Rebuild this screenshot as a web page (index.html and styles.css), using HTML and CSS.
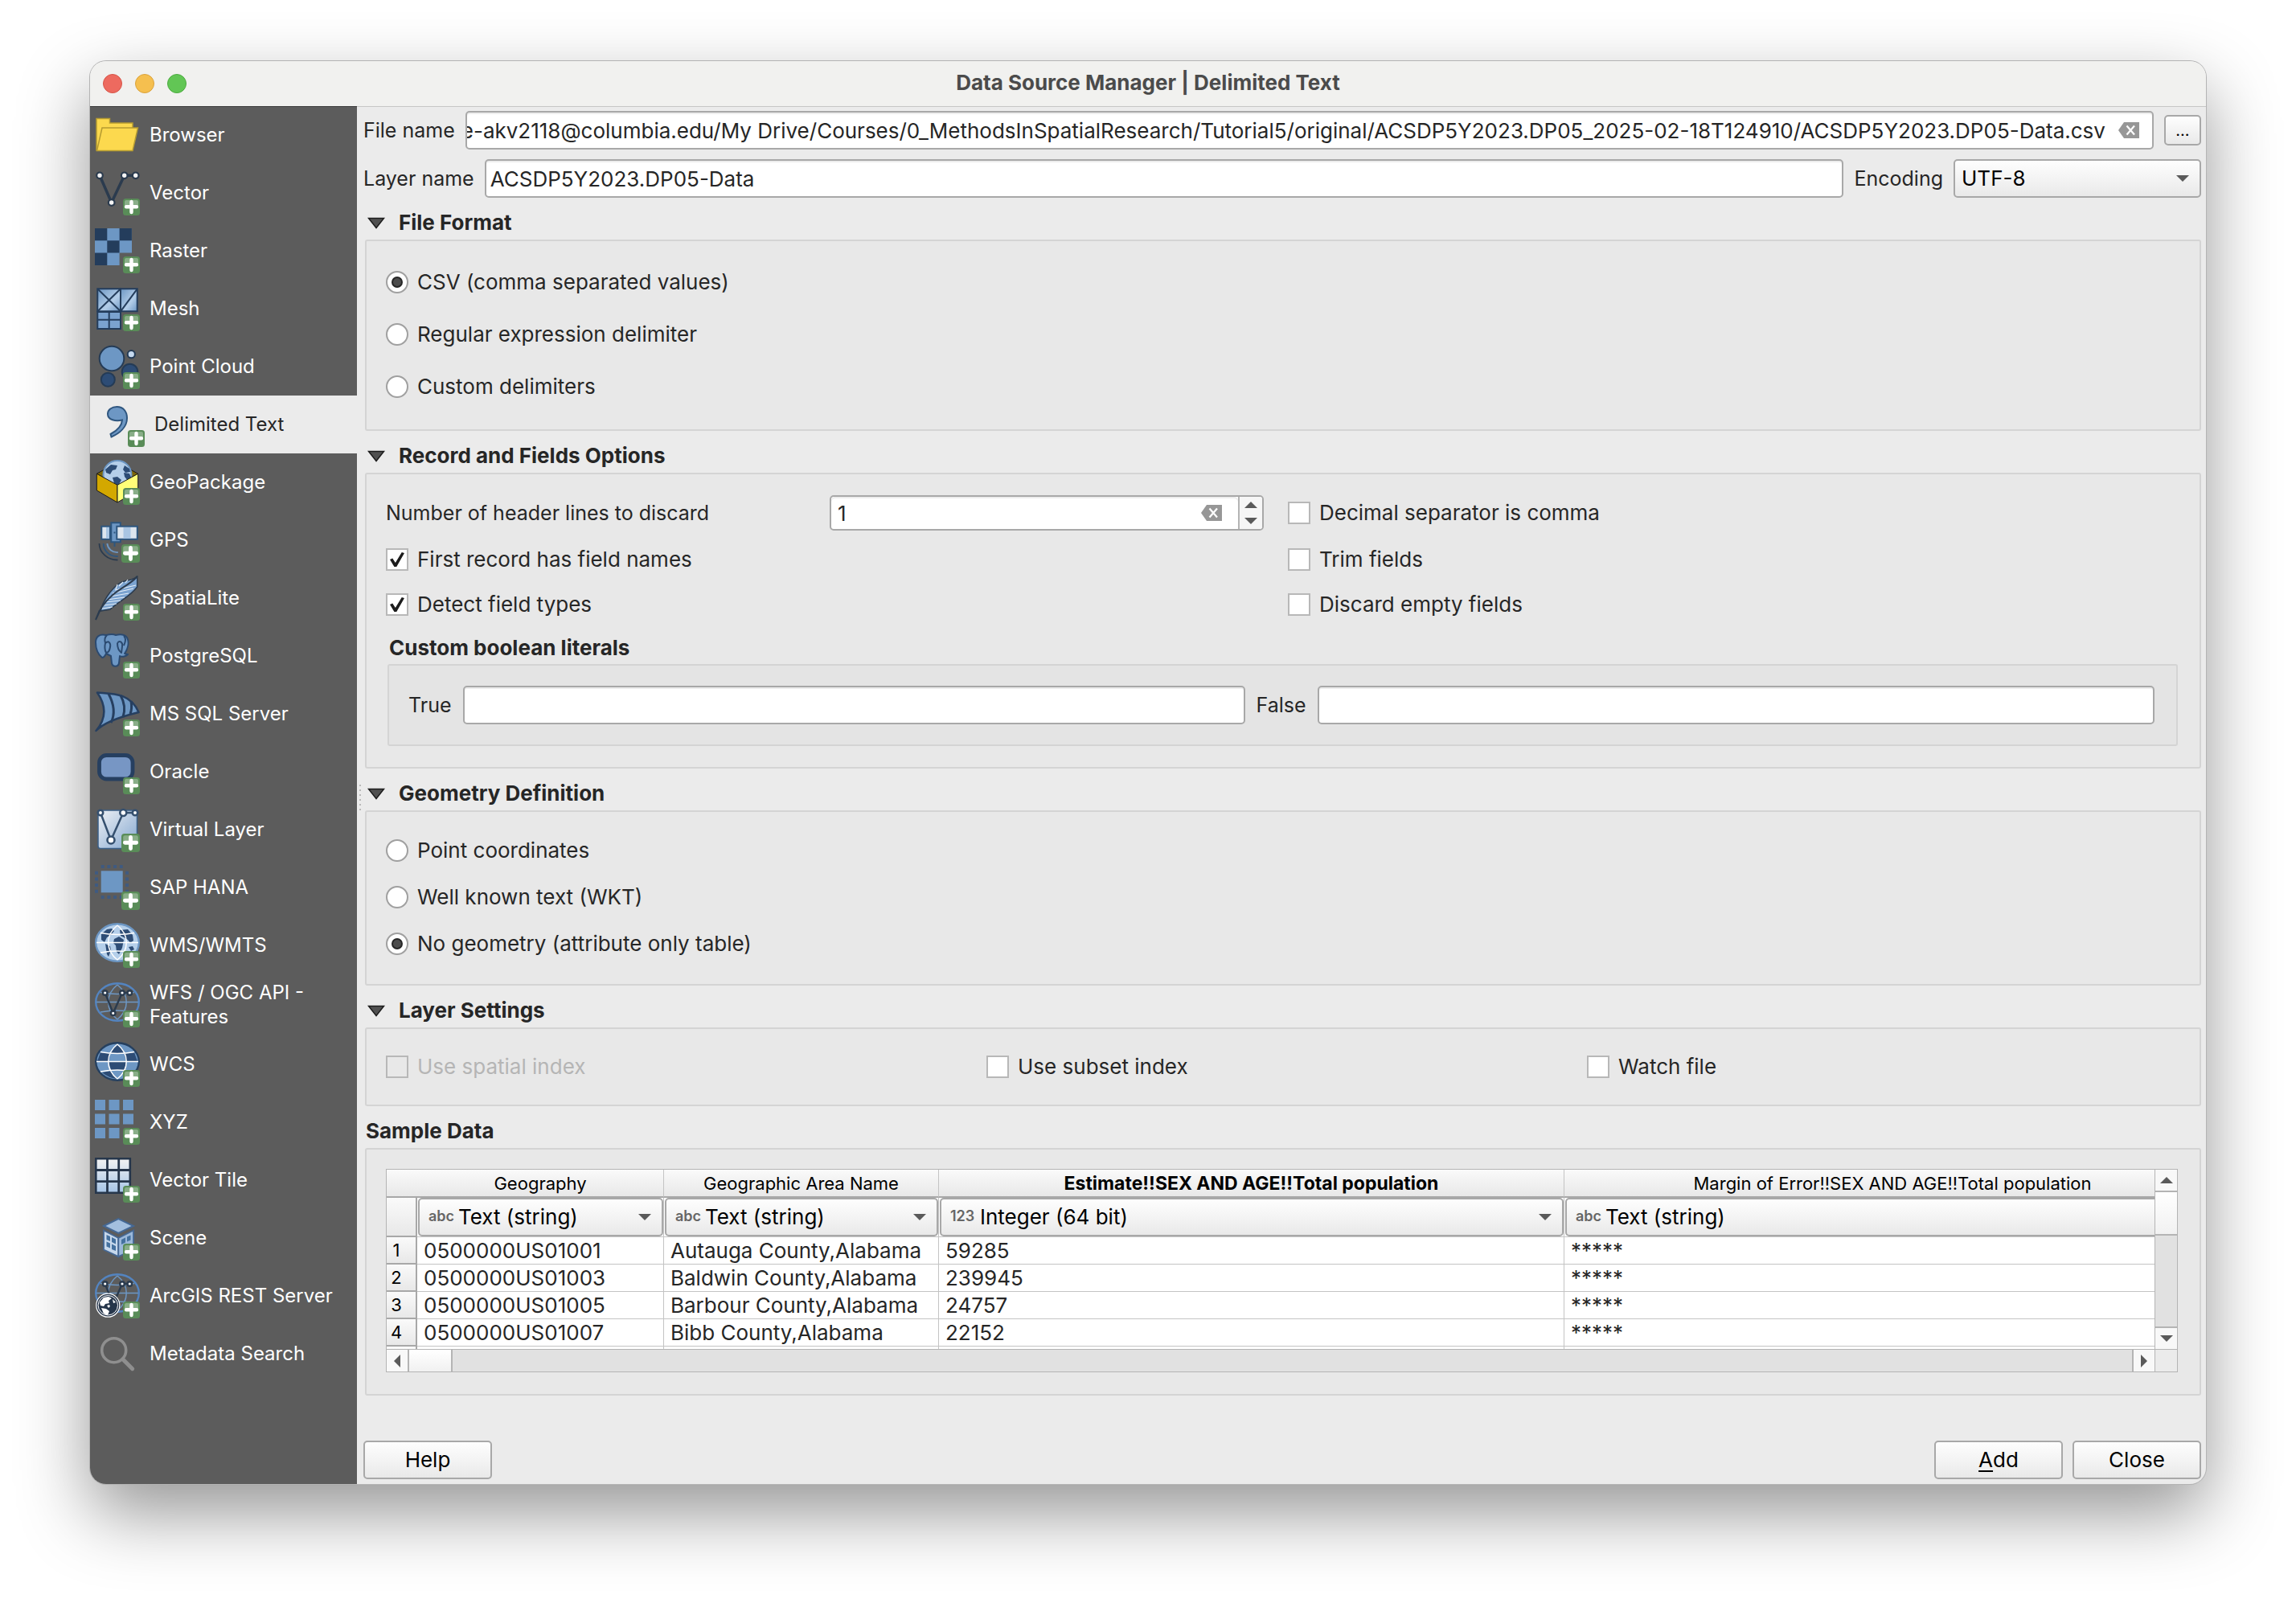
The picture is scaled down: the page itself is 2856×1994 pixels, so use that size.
FILE: index.html
```html
<!DOCTYPE html>
<html lang="en">
<head>
    <meta charset="utf-8">
    <title>Data Source Manager | Delimited Text</title>
    <link rel="stylesheet" href="styles.css">
</head>
<body>
    <!-- shared icon parts -->
    <svg class="defs" width="0" height="0" aria-hidden="true">
        <defs>
            <linearGradient id="sky" x1="0" y1="0" x2="1" y2="1">
                <stop offset="0" stop-color="#6d97c4"/>
                <stop offset=".6" stop-color="#b3cde8"/>
                <stop offset="1" stop-color="#6d97c4"/>
            </linearGradient>
            <linearGradient id="pale" x1="0" y1="0" x2="1" y2="1">
                <stop offset="0" stop-color="#eef1f5"/>
                <stop offset="1" stop-color="#84a7d0"/>
            </linearGradient>
            <linearGradient id="fade" x1="0" y1="0" x2="0" y2="1">
                <stop offset="0" stop-color="#f2f2f2"/>
                <stop offset="1" stop-color="#a5c4e6"/>
            </linearGradient>
        </defs>
        <symbol id="plus" viewBox="0 0 21 21">
            <rect width="21" height="21" rx="3.5" fill="#598c58"/>
            <path d="M2 10V4a2 2 0 0 1 2-2h13a2 2 0 0 1 2 2v6z" fill="#89ae88"/>
            <path d="M10.5 4v13M4 10.3h13" stroke="#fff" stroke-width="4.4" stroke-linecap="round"/>
        </symbol>
        <symbol id="meridians" viewBox="0 0 56 56">
            <path d="M28 3C13 15 13 34 28 46M28 3C43 15 43 34 28 46M2 24.5H54M7 12.5q21 4 42 0M7 37q21-4 42 0" fill="none" stroke="currentColor" stroke-width="1.5"/>
        </symbol>
        <symbol id="nodes" viewBox="0 0 56 56">
            <path d="M12.7 13l10 25.3L34 13h9.3" fill="none" stroke="#2b3b4e" stroke-width="2.4"/>
            <g fill="#fff" stroke="#2b3b4e" stroke-width="2.4">
                <circle cx="12.7" cy="13" r="2.8"/><circle cx="34" cy="13" r="2.8"/><circle cx="43.3" cy="13" r="2.8"/><circle cx="22.7" cy="38.3" r="2.8"/>
            </g>
        </symbol>
        <symbol id="clear" viewBox="0 0 26 20">
            <path d="M7 0h19v20H7L0 10z" fill="#979797"/>
            <path d="M10.5 4.5l9.5 11M20 4.5l-9.5 11" stroke="#fff" stroke-width="2.2"/>
        </symbol>
        <symbol id="caret" viewBox="0 0 16 8">
            <path d="M0 0h16L8 8z" fill="#5a5a5a"/>
        </symbol>
        <symbol id="disclosure" viewBox="0 0 22 15">
            <path d="M1.5 1.5h19L11 13.5z" fill="#505050" stroke="#1c1c1c" stroke-width="1.5"/>
        </symbol>
    </svg>

    <div class="window">
        <header class="titlebar">
            <div class="lights">
                <button class="light red" type="button" aria-label="Close window"></button>
                <button class="light amber" type="button" aria-label="Minimise"></button>
                <button class="light green" type="button" aria-label="Zoom"></button>
            </div>
            <h1>Data Source Manager | Delimited Text</h1>
        </header>

        <div class="body">
            <nav class="sidebar">
                <a class="item" href="#">
                    <svg class="icon" viewBox="0 0 56 56">
                        <path d="M2 47.5V7.5h16.5V13H47v6" fill="#fcd94e" stroke="#b59b31" stroke-width="1.5"/>
                        <path d="M9 19h44.5L47 47.5H2.5z" fill="#fcd94e" stroke="#b59b31" stroke-width="1.5"/>
                    </svg>
                    <span>Browser</span>
                </a>
                <a class="item" href="#">
                    <svg class="icon" viewBox="0 0 56 56">
                        <path d="M6 6.3L20.7 40l16-33.7h14" fill="none" stroke="#2b3b4e" stroke-width="3.5"/>
                        <g fill="#f4f4f4" stroke="#2b3b4e" stroke-width="2.2">
                            <circle cx="6" cy="6.3" r="3.8"/><circle cx="36.7" cy="6.3" r="3.8"/><circle cx="50.7" cy="6.3" r="3.8"/><circle cx="20.7" cy="40" r="3.8"/>
                        </g>
                        <use href="#plus" x="35" y="35" width="21" height="21"/>
                    </svg>
                    <span>Vector</span>
                </a>
                <a class="item" href="#">
                    <svg class="icon" viewBox="0 0 56 56">
                        <path d="M0 0h46v30.6H30.6V46H0z" fill="#6d97c4"/>
                        <path d="M0 0h15.3v15.3H0zM30.6 0h15.3v15.3H30.6zM15.3 15.3h15.3v15.3H15.3zM0 30.6h15.3V46H0z" fill="#243d5c"/>
                        <use href="#plus" x="35" y="35" width="21" height="21"/>
                    </svg>
                    <span>Raster</span>
                </a>
                <a class="item" href="#">
                    <svg class="icon" viewBox="0 0 56 56">
                        <g stroke="#243d5c" stroke-width="2">
                            <path d="M3.3 3.3H32v28H3.3z" fill="url(#sky)"/>
                            <path d="M32 3.3h20.7v28H32z" fill="url(#sky)"/>
                            <path d="M3.3 32H32v21H3.3z" fill="#7ba3d0"/>
                            <path d="M3.3 3.3l28.7 28M32 3.3l-28.7 28M52.7 3.3L32 31.3M17.7 32v21M3.3 41.7H32" fill="none"/>
                        </g>
                        <use href="#plus" x="35" y="35" width="21" height="21"/>
                    </svg>
                    <span>Mesh</span>
                </a>
                <a class="item" href="#">
                    <svg class="icon" viewBox="0 0 56 56">
                        <g stroke="#243b56" stroke-width="2">
                            <circle cx="21" cy="18" r="15.3" fill="#6d97c4"/>
                            <circle cx="45.3" cy="12.7" r="4.6" fill="#c5d9ef"/>
                            <circle cx="43.5" cy="34.5" r="9.8" fill="#2d4c75"/>
                            <circle cx="16.3" cy="44.3" r="8.5" fill="#2d4c75"/>
                        </g>
                        <use href="#plus" x="35" y="35" width="21" height="21"/>
                    </svg>
                    <span>Point Cloud</span>
                </a>
                <a class="item selected" href="#" aria-current="page">
                    <svg class="icon" viewBox="0 0 56 56">
                        <path d="M21.5 6C29 6 34 11.5 34 20c0 11-9 19-19.5 23.5L13.5 40C21 36 27.5 30.5 28 22.5c-8 2-18 0-18-7.5 0-5.5 5-9 11.5-9z" fill="#6d97c4" stroke="#2f567f" stroke-width="2"/>
                        <use href="#plus" x="35" y="35" width="21" height="21"/>
                    </svg>
                    <span>Delimited Text</span>
                </a>
                <a class="item" href="#">
                    <svg class="icon" viewBox="0 0 56 56">
                        <path d="M2.3 17.3L28 3l25.7 14.3L28 31.3z" fill="#7d6608" stroke="#1b1b1b"/>
                        <circle cx="28" cy="18.5" r="17.5" fill="#b5cfea" stroke="#6d97c4" stroke-width="2"/>
                        <path d="M13 12l7-6 8 1-2 5-4 1-3 5-5-2zM22 22l6-1 5 4-4 7-5-3zM37 7l6 4 1 4-6 1-3-4zM36 16l7 1 2 5-4 4-4-5z" fill="#2d4c75"/>
                        <path d="M2.3 17.3L28 31.3V53L2.3 38z" fill="#d3a800" stroke="#1b1b1b"/>
                        <path d="M53.7 17.3L28 31.3V53l25.7-15z" fill="#ffff78" stroke="#1b1b1b"/>
                        <use href="#plus" x="35" y="35" width="21" height="21"/>
                    </svg>
                    <span>GeoPackage</span>
                </a>
                <a class="item" href="#">
                    <svg class="icon" viewBox="0 0 56 56">
                        <g stroke="#2d567f" stroke-width="2">
                            <path d="M8.3 10.8H19v16H8.3z" fill="#dde5ee"/>
                            <path d="M20.3 6.3h11.5v24H20.3z" fill="#6d97c4"/>
                            <path d="M27.3 10.8h25.5v16H27.3z" fill="#dde5ee"/>
                            <path d="M24.5 31v5M23.5 18.5h2" fill="none"/>
                        </g>
                        <path d="M14 12h4v14h-4zM35.5 12h9v14h-9z" fill="#a9c5e3"/>
                        <g fill="none" stroke-width="1.8">
                            <path d="M5.5 32c0 12 11 21 23 20.5" stroke="#2b3b4e"/>
                            <path d="M10.7 32c0 10 8 16.5 18 16" stroke="#2d567f"/>
                            <path d="M15.3 32c1 7 6 11.5 13.5 11" stroke="#6d97c4"/>
                        </g>
                        <use href="#plus" x="33" y="33" width="23" height="23"/>
                    </svg>
                    <span>GPS</span>
                </a>
                <a class="item" href="#">
                    <svg class="icon" viewBox="0 0 56 56">
                        <path d="M52.7 1v13C44 26 32 30 19 42L7 44C10 32 19 18 30 10c7-5 16-3 22.7-9z" fill="#7ba3d0" stroke="#2b3b4e" stroke-width="1.5"/>
                        <path d="M22 22l26-6M25 18l26-6M19 26l23-4M15 30l22-3M13 33l19-2M11 37l16-2M9 41l13-2M30 13l5-5M26 17l2-6M38 9l3-4" stroke="#e3edf7" stroke-width="1.2"/>
                        <path d="M52.7 1C42 14 22 18 8 40L1 55l5-12" fill="none" stroke="#2b3b4e" stroke-width="2"/>
                        <use href="#plus" x="35" y="35" width="21" height="21"/>
                    </svg>
                    <span>SpatiaLite</span>
                </a>
                <a class="item" href="#">
                    <svg class="icon" viewBox="0 0 56 56">
                        <g fill="#6d97c4" stroke="#2b4a70" stroke-width="2" stroke-linejoin="round">
                            <path d="M14 2C6 0 1 4 1 11c0 8 3 15 8 19 3 0 4-3 5-5l6 3 1 9c1 5 8 5 9 0l1-9c3 2 8 0 10-2l-4-1c4-6 6-14 3-20-4-5-10-4-14-3-4-2-8-1-12 0z"/>
                            <path d="M15 2c-3 3-3 7-2 10 4-4 7 0 6 5-1 6-3 7-5 7-2-4-2-8-1-12M28 12c3-4 7-1 6 4l-1 8c-4-3-5-7-5-12M36 3c3 3 2 8 0 12" fill="none"/>
                        </g>
                        <use href="#plus" x="35" y="35" width="21" height="21"/>
                    </svg>
                    <span>PostgreSQL</span>
                </a>
                <a class="item" href="#">
                    <svg class="icon" viewBox="0 0 56 56">
                        <path d="M3 1.5C20 3 44 1 54.5 26 38 30 12 38 1.5 49 16 32 13 16 3 1.5z" fill="#6d97c4" stroke="#263f60" stroke-width="2.5" stroke-linejoin="round"/>
                        <path d="M17 3c7 13 8 26 3 36M32 5c5 9 6 18 3 27M45 12c1 6 1 11-1 16" fill="none" stroke="#263f60" stroke-width="3"/>
                        <use href="#plus" x="35" y="35" width="21" height="21"/>
                    </svg>
                    <span>MS SQL Server</span>
                </a>
                <a class="item" href="#">
                    <svg class="icon" viewBox="0 0 56 56">
                        <rect x="5.5" y="7.5" width="41.5" height="29.5" rx="9" fill="#7796c4" stroke="#263f60" stroke-width="4.8"/>
                        <use href="#plus" x="35" y="35" width="21" height="21"/>
                    </svg>
                    <span>Oracle</span>
                </a>
                <a class="item" href="#">
                    <svg class="icon" viewBox="0 0 56 56">
                        <rect x="4" y="4" width="48.5" height="47.5" rx="3" fill="url(#pale)" stroke="#3b5f87" stroke-width="1.5"/>
                        <path d="M7 7l13 34L35.3 7h15.4" fill="none" stroke="#35506f" stroke-width="2.5"/>
                        <g fill="#fff" stroke="#35506f" stroke-width="2.6">
                            <circle cx="7" cy="7" r="3.2"/><circle cx="35.3" cy="7" r="4"/><circle cx="50" cy="7" r="3.2"/><circle cx="20" cy="41" r="4.5"/>
                        </g>
                        <use href="#plus" x="33" y="33" width="23" height="23"/>
                    </svg>
                    <span>Virtual Layer</span>
                </a>
                <a class="item" href="#">
                    <svg class="icon" viewBox="0 0 56 56">
                        <path d="M7.7 7.3h27v27h-27z" fill="#6d97c4"/>
                        <path d="M7.7 2h27M7.7 40h27M2 7.7v27M40 7.7v27" stroke="#3f5a80" stroke-width="4" stroke-dasharray="4 3.7"/>
                        <use href="#plus" x="33" y="33" width="23" height="23"/>
                    </svg>
                    <span>SAP HANA</span>
                </a>
                <a class="item" href="#">
                    <svg class="icon" viewBox="0 0 56 56">
                        <ellipse cx="28" cy="24.5" rx="26.8" ry="23.2" fill="#b5cfea" stroke="#6d97c4" stroke-width="2.4"/>
                        <path d="M8 14l7-6 6-1 3 3-4 5-5 3-3 6-4-3zM13 26l6 3 1 5-3 8-2-3zM24 20l6-3 6 4-2 10-4 8-3-3-1-8-3-3zM31 9l10-1 6 7 1 7-4 3-3-4-5-3-4-2zM42 30l5-1 2 4-4 2z" fill="#2d4c75"/>
                        <use href="#meridians" width="56" height="56" class="lines-white"/>
                        <use href="#plus" x="35" y="35" width="21" height="21"/>
                    </svg>
                    <span>WMS/WMTS</span>
                </a>
                <a class="item" href="#">
                    <svg class="icon" viewBox="0 0 56 56">
                        <ellipse cx="28" cy="24.5" rx="26.8" ry="23.2" fill="none" stroke="#5384c0" stroke-width="2.4"/>
                        <use href="#meridians" width="56" height="56" class="lines-blue"/>
                        <use href="#nodes" width="56" height="56"/>
                        <use href="#plus" x="35" y="35" width="21" height="21"/>
                    </svg>
                    <span>WFS / OGC API - Features</span>
                </a>
                <a class="item" href="#">
                    <svg class="icon" viewBox="0 0 56 56">
                        <ellipse cx="28" cy="24.5" rx="26.8" ry="23.2" fill="#6d97c4" stroke="#26405f" stroke-width="2.4"/>
                        <path d="M20 14Q24 6 28 3q5 4 8 11zM17 24.5h22L37 35H20zM3 24h14l2-9.5L7 13zM39 24h14l-4-11-12 1.5zM20 36L9 38q8 7 19 8-6-4-8-10z" fill="#2d4c75"/>
                        <use href="#meridians" width="56" height="56" class="lines-white"/>
                        <use href="#plus" x="35" y="35" width="21" height="21"/>
                    </svg>
                    <span>WCS</span>
                </a>
                <a class="item" href="#">
                    <svg class="icon" viewBox="0 0 56 56">
                        <path d="M0 0h13v13H0zM17.5 0h13v13h-13zM35 0h13v13H35zM0 17.5h13v13H0zM17.5 17.5h13v13h-13zM35 17.5h13v13H35zM0 35h13v13H0zM17.5 35h13v13h-13z" fill="#6d97c4"/>
                        <use href="#plus" x="35" y="35" width="21" height="21"/>
                    </svg>
                    <span>XYZ</span>
                </a>
                <a class="item" href="#">
                    <svg class="icon" viewBox="0 0 56 56">
                        <path d="M1.3 1.3h42.5v42.5H1.3z" fill="url(#fade)" stroke="#26364b" stroke-width="2.6"/>
                        <path d="M15.5 1v43M29.7 1v43M1 15.5h43M1 29.7h43" stroke="#26364b" stroke-width="2.8"/>
                        <use href="#plus" x="35" y="35" width="21" height="21"/>
                    </svg>
                    <span>Vector Tile</span>
                </a>
                <a class="item" href="#">
                    <svg class="icon" viewBox="0 0 56 56">
                        <path d="M11 18.5l18.3 9.5v23L11 42.5z" fill="#c6d8ec" stroke="#456894" stroke-width="1.8"/>
                        <path d="M48 18.5L29.3 28v23L48 42.5z" fill="#9bb8da" stroke="#456894" stroke-width="1.8"/>
                        <path d="M14.5 24l4.5 2v6l-4.5-2zM21 27l5 2.5v6L21 33zM14.5 32.5l4.5 2v6l-4.5-2zM21 35.5l5 2.5v6L21 42zM33 30l5-2.5v6L33 36zM40 26.5l4.5-2v6l-4.5 2z" fill="#44719f"/>
                        <path d="M11 13l18.3-9L48 13l-18.7 9z" fill="#a3bfdf" stroke="#456894" stroke-width="2"/>
                        <use href="#plus" x="35" y="35" width="21" height="21"/>
                    </svg>
                    <span>Scene</span>
                </a>
                <a class="item" href="#">
                    <svg class="icon" viewBox="0 0 56 56">
                        <ellipse cx="28" cy="24.5" rx="26.8" ry="23.2" fill="none" stroke="#5384c0" stroke-width="2.4"/>
                        <use href="#meridians" width="56" height="56" class="lines-blue"/>
                        <use href="#nodes" width="56" height="56"/>
                        <circle cx="16.3" cy="39.7" r="14.5" fill="#26364b" stroke="#fff" stroke-width="1.2"/>
                        <path d="M6 36l5-6 6-1 4 2-4 3 1 3-5 1-2 3-4-1zM8 43l6 1 4 3-2 5-5-2zM22 32l4 4-3 1zM15 40l3-1 1 2-2 2z" fill="#fff"/>
                        <circle cx="16.3" cy="39.7" r="12.2" fill="none" stroke="#fff"/>
                        <use href="#plus" x="35" y="35" width="21" height="21"/>
                    </svg>
                    <span>ArcGIS REST Server</span>
                </a>
                <a class="item" href="#">
                    <svg class="icon" viewBox="0 0 56 56">
                        <circle cx="23.7" cy="23.7" r="15" fill="none" stroke="#8f8f8f" stroke-width="3.6"/>
                        <path d="M35 35l11.7 11.7" stroke="#8f8f8f" stroke-width="5" stroke-linecap="round"/>
                    </svg>
                    <span>Metadata Search</span>
                </a>
            </nav>

            <form class="main" onsubmit="return false">
                <div class="row">
                    <label for="fileName">File name</label>
                    <div class="clearable grow">
                        <input class="field" type="text" id="fileName" value="e-akv2118@columbia.edu/My Drive/Courses/0_MethodsInSpatialResearch/Tutorial5/original/ACSDP5Y2023.DP05_2025-02-18T124910/ACSDP5Y2023.DP05-Data.csv">
                        <button class="clear" type="button" aria-label="Clear file name"><svg width="26" height="20"><use href="#clear"/></svg></button>
                    </div>
                    <button class="button browse" type="button">...</button>
                </div>
                <div class="row">
                    <label for="layerName">Layer name</label>
                    <input class="field grow" type="text" id="layerName" value="ACSDP5Y2023.DP05-Data">
                    <label for="encoding">Encoding</label>
                    <div class="dropdown encoding-box">
                        <select id="encoding"><option>UTF-8</option></select>
                        <svg class="arrow" width="16" height="8"><use href="#caret"/></svg>
                    </div>
                </div>

                <h2><svg width="22" height="15"><use href="#disclosure"/></svg>File Format</h2>
                <div class="group radios loose">
                    <label class="option"><input type="radio" name="format" checked>CSV (comma separated values)</label>
                    <label class="option"><input type="radio" name="format">Regular expression delimiter</label>
                    <label class="option"><input type="radio" name="format">Custom delimiters</label>
                </div>

                <h2><svg width="22" height="15"><use href="#disclosure"/></svg>Record and Fields Options</h2>
                <div class="group records">
                    <div class="fields">
                        <label for="headerLines">Number of header lines to discard</label>
                        <div class="spin">
                            <div class="clearable grow">
                                <input class="field" type="number" id="headerLines" value="1">
                                <button class="clear" type="button" aria-label="Clear header lines"><svg width="26" height="20"><use href="#clear"/></svg></button>
                            </div>
                            <div class="steps">
                                <button type="button" aria-label="Increase"><svg class="up" width="16" height="8"><use href="#caret"/></svg></button>
                                <button type="button" aria-label="Decrease"><svg width="16" height="8"><use href="#caret"/></svg></button>
                            </div>
                        </div>
                        <label class="option"><input type="checkbox">Decimal separator is comma</label>
                        <label class="option wide"><input type="checkbox" checked>First record has field names</label>
                        <label class="option"><input type="checkbox">Trim fields</label>
                        <label class="option wide"><input type="checkbox" checked>Detect field types</label>
                        <label class="option"><input type="checkbox">Discard empty fields</label>
                    </div>
                    <h3>Custom boolean literals</h3>
                    <div class="group literals">
                        <label for="literalTrue">True</label>
                        <input class="field true" type="text" id="literalTrue">
                        <label for="literalFalse">False</label>
                        <input class="field false" type="text" id="literalFalse">
                    </div>
                </div>

                <h2><svg width="22" height="15"><use href="#disclosure"/></svg>Geometry Definition</h2>
                <div class="group radios">
                    <label class="option"><input type="radio" name="geometry">Point coordinates</label>
                    <label class="option"><input type="radio" name="geometry">Well known text (WKT)</label>
                    <label class="option"><input type="radio" name="geometry" checked>No geometry (attribute only table)</label>
                </div>

                <h2><svg width="22" height="15"><use href="#disclosure"/></svg>Layer Settings</h2>
                <div class="group settings">
                    <label class="option disabled"><input type="checkbox" disabled>Use spatial index</label>
                    <label class="option"><input type="checkbox">Use subset index</label>
                    <label class="option"><input type="checkbox">Watch file</label>
                </div>

                <h2 class="plain">Sample Data</h2>
                <div class="group sample">
                    <div class="grid-view">
                        <div class="viewport">
                            <table>
                                <colgroup>
                                    <col class="col-num"><col class="col-geo"><col class="col-area"><col class="col-estimate"><col class="col-margin">
                                </colgroup>
                                <thead>
                                    <tr>
                                        <th></th>
                                        <th>Geography</th>
                                        <th>Geographic Area Name</th>
                                        <th class="current">Estimate!!SEX AND AGE!!Total population</th>
                                        <th>Margin of Error!!SEX AND AGE!!Total population</th>
                                    </tr>
                                </thead>
                                <tbody>
                                    <tr class="types">
                                        <th></th>
                                        <td><div class="dropdown"><span class="kind">abc</span><select aria-label="Geography type"><option>Text (string)</option></select><svg class="arrow" width="16" height="8"><use href="#caret"/></svg></div></td>
                                        <td><div class="dropdown"><span class="kind">abc</span><select aria-label="Geographic Area Name type"><option>Text (string)</option></select><svg class="arrow" width="16" height="8"><use href="#caret"/></svg></div></td>
                                        <td><div class="dropdown"><span class="kind">123</span><select aria-label="Estimate type"><option>Integer (64 bit)</option></select><svg class="arrow" width="16" height="8"><use href="#caret"/></svg></div></td>
                                        <td><div class="dropdown"><span class="kind">abc</span><select aria-label="Margin of Error type"><option>Text (string)</option></select><svg class="arrow" width="16" height="8"><use href="#caret"/></svg></div></td>
                                    </tr>
                                    <tr><th>1</th><td>0500000US01001</td><td>Autauga County,Alabama</td><td>59285</td><td>*****</td></tr>
                                    <tr><th>2</th><td>0500000US01003</td><td>Baldwin County,Alabama</td><td>239945</td><td>*****</td></tr>
                                    <tr><th>3</th><td>0500000US01005</td><td>Barbour County,Alabama</td><td>24757</td><td>*****</td></tr>
                                    <tr><th>4</th><td>0500000US01007</td><td>Bibb County,Alabama</td><td>22152</td><td>*****</td></tr>
                                    <tr><th></th><td></td><td></td><td></td><td></td></tr>
                                </tbody>
                            </table>
                        </div>
                        <div class="bar vertical">
                            <button type="button" aria-label="Scroll up"><svg class="up" width="16" height="8"><use href="#caret"/></svg></button>
                            <div class="thumb"></div>
                            <button class="end" type="button" aria-label="Scroll down"><svg width="16" height="8"><use href="#caret"/></svg></button>
                        </div>
                        <div class="bar horizontal">
                            <button type="button" aria-label="Scroll left"><svg class="left" width="16" height="8"><use href="#caret"/></svg></button>
                            <div class="thumb"></div>
                            <button class="end" type="button" aria-label="Scroll right"><svg class="right" width="16" height="8"><use href="#caret"/></svg></button>
                        </div>
                        <div class="corner"></div>
                    </div>
                </div>

                <footer class="actions">
                    <button class="button" type="button">Help</button>
                    <button class="button push" type="button"><u>A</u>dd</button>
                    <button class="button" type="button">Close</button>
                </footer>
            </form>
        </div>
    </div>

    <script>
        // keep the end of a long path in view
        const fileName = document.getElementById("fileName");
        fileName.scrollLeft = fileName.scrollWidth;
    </script>
</body>
</html>
```

FILE: styles.css
```css
*, *::before {
    box-sizing: border-box;
}

body {
    margin: 0;
    padding: 76px 112px 148px;
    background: #fff;
    font-family: Inter, "Liberation Sans", sans-serif;
    font-size: 26px;
    line-height: 30px;
    color: #262626;
}

button, input, select {
    font: inherit;
    color: inherit;
    margin: 0;
}

label {
    font-size: 25px;
}

.defs {
    position: absolute;
}

svg {
    display: block;
}

.up {
    transform: rotate(180deg);
}

.left {
    transform: rotate(90deg);
}

.right {
    transform: rotate(-90deg);
}

/* window */

.window {
    border-radius: 20px;
    background: #ebebeb;
    overflow: hidden;
    box-shadow: 0 0 0 1px #b4b4b4, 0 36px 88px rgba(0, 0, 0, .42);
}

.titlebar {
    position: relative;
    height: 56px;
    padding-bottom: 2px;
    background: #f1f1ef;
    display: flex;
    align-items: center;
    justify-content: center;
}

.titlebar h1 {
    margin: 0;
    font-size: 26px;
    font-weight: 700;
    color: #4b4b4b;
}

.lights {
    position: absolute;
    left: 16px;
    top: 16px;
    display: flex;
    gap: 16px;
}

.light {
    width: 24px;
    height: 24px;
    padding: 0;
    border-radius: 50%;
    border: 1px solid;
}

.red {
    background: #ed6a5f;
    border-color: #d65448;
}

.amber {
    background: #f5bf4f;
    border-color: #d9a23c;
}

.green {
    background: #62c655;
    border-color: #4dab40;
}

.body {
    display: flex;
}

/* sidebar */

.sidebar {
    flex: 0 0 332px;
    background: #5c5c5c;
    box-shadow: inset 0 1px 0 #3c3c3c;
}

.item {
    display: flex;
    align-items: center;
    gap: 12px;
    min-height: 72px;
    padding: 8px 6px;
    font-size: 24px;
    color: #fff;
    text-decoration: none;
}

.item.selected {
    padding-left: 12px;
    background: #ebebeb;
    color: #262626;
}

.icon {
    flex: none;
    width: 56px;
    height: 56px;
}

.lines-white {
    color: #fff;
}

.lines-blue {
    color: #6d97c4;
}

/* form */

.main {
    position: relative;
    flex: 1;
    min-width: 0;
    padding: 5px 6px 6px 8px;
    border-top: 1px solid #c6c6c6;
}

/* splitter handle */
.main::before {
    content: "";
    position: absolute;
    left: 3px;
    top: calc(50% - 14px);
    width: 2px;
    height: 34px;
    background: repeating-linear-gradient(#b9b9b9 0 2px, transparent 2px 6px);
}

.row {
    display: flex;
    align-items: center;
    gap: 13px;
}

.row + .row {
    margin-top: 12px;
}

.grow {
    flex: 1;
    min-width: 0;
}

.field {
    height: 48px;
    width: 100%;
    min-width: 0;
    padding: 0 5px;
    border: 2px solid #a8a8a8;
    border-radius: 5px;
    background: #fff;
    box-shadow: inset 0 2px 0 #ededed;
    outline: none;
}

.clearable {
    position: relative;
}

#fileName {
    padding: 0 58px 0 0;
}

.clear {
    position: absolute;
    right: 18px;
    top: 14px;
    padding: 0;
    border: 0;
    background: none;
}

.button {
    width: 160px;
    height: 48px;
    padding: 0;
    border: 2px solid #a8a8a8;
    border-radius: 5px;
    background: linear-gradient(#fefefe, #e9e9e9);
    color: #000;
}

.browse {
    width: 46px;
    height: 38px;
    font-size: 20px;
}

.button u {
    text-underline-offset: 4px;
}

.dropdown {
    position: relative;
}

.dropdown select {
    appearance: none;
    display: block;
    width: 100%;
    height: 48px;
    padding: 0 8px;
    border: 2px solid #a8a8a8;
    border-radius: 5px;
    background: linear-gradient(#fefefe, #e9e9e9);
    color: #000;
}

.encoding-box {
    width: 308px;
}

.arrow {
    position: absolute;
    right: 15px;
    top: 20px;
}

h2 {
    display: flex;
    align-items: center;
    gap: 17px;
    height: 52px;
    margin: 0;
    padding: 10px 5px 0;
    font-size: 26px;
    font-weight: 700;
}

h2.plain {
    padding-left: 3px;
}

h3 {
    margin: 0;
    padding-left: 4px;
    font-size: 26px;
    font-weight: 700;
}

.group {
    margin-left: 2px;
    padding: 0 27px 0 24px;
    border: 2px solid #d4d4d4;
    border-radius: 3px;
    background: #e8e8e8;
}

.option {
    display: flex;
    align-items: center;
    gap: 11px;
    font-size: 26px;
}

.option input {
    appearance: none;
    position: relative;
    flex: none;
    width: 28px;
    height: 28px;
    border: 2px solid #b8b8b8;
    background: #fff;
}

.option input[type="radio"] {
    border-color: #a0a0a0;
    border-radius: 50%;
}

.option input[type="radio"]:checked::before {
    content: "";
    position: absolute;
    left: 5px;
    top: 5px;
    width: 14px;
    height: 14px;
    border: 2px solid #262626;
    border-radius: 50%;
    background: #4c4c4c;
}

.option input[type="checkbox"]:checked::before {
    content: "";
    position: absolute;
    left: 3px;
    top: 3px;
    width: 18px;
    height: 18px;
    background: #1c1c1c;
    clip-path: polygon(0 50%, 18% 42%, 38% 72%, 82% 0, 100% 6%, 46% 100%, 30% 100%);
}

.option.disabled {
    color: #b5b5b5;
}

.option.disabled input {
    background: none;
}

.radios {
    display: flex;
    flex-direction: column;
    gap: 28px;
    padding-top: 33px;
    padding-bottom: 35px;
}

.radios.loose {
    gap: 35px;
    padding-top: 36px;
    padding-bottom: 38px;
}

.records {
    padding-top: 26px;
    padding-bottom: 26px;
}

.fields {
    display: grid;
    grid-template-columns: 540px 540px 1fr;
    grid-template-rows: 44px 58px 56px;
    align-items: center;
    column-gap: 12px;
    margin-bottom: 17px;
}

.fields .option:not(.wide) {
    padding-left: 18px;
}

.fields .wide {
    grid-column: span 2;
}

.fields .option {
    align-self: end;
    height: 44px;
}

.spin {
    display: flex;
    height: 44px;
    border: 2px solid #a8a8a8;
    border-radius: 5px;
    background: #fff;
    overflow: hidden;
}

.spin .field {
    height: 40px;
    padding-left: 8px;
    border: 0;
    appearance: textfield;
}

.spin .field::-webkit-inner-spin-button {
    display: none;
}

.spin .clear {
    top: 10px;
    right: 20px;
}

.steps {
    display: grid;
    width: 30px;
    border-left: 2px solid #b4b4b4;
}

.steps button {
    display: grid;
    place-items: center;
    padding: 0;
    border: 0;
    background: #f6f6f6;
}

.literals {
    display: flex;
    align-items: center;
    gap: 14px;
    margin-top: 5px;
    height: 102px;
    background: #e4e4e4;
}

.literals .true {
    flex: 14;
}

.literals .false {
    flex: 15;
}

.settings {
    display: grid;
    grid-template-columns: repeat(3, 1fr);
    column-gap: 12px;
    padding-top: 32px;
    padding-bottom: 32px;
}

/* sample table */

.sample {
    padding-top: 24px;
    padding-bottom: 27px;
}

.grid-view {
    display: grid;
    grid-template-columns: 1fr 28px;
    grid-template-rows: 223px 28px;
    border: 1px solid #b4b4b4;
}

.viewport {
    overflow: hidden;
    background: #fff;
}

table {
    width: 2282px;
    table-layout: fixed;
    border-collapse: separate;
    border-spacing: 0;
}

.col-num {
    width: 38px;
}

.col-geo {
    width: 307px;
}

.col-area {
    width: 342px;
}

.col-estimate {
    width: 778px;
}

.col-margin {
    width: 817px;
}

th {
    height: 34px;
    padding: 0;
    font-size: 22px;
    line-height: 26px;
    font-weight: 400;
    color: #000;
    background: linear-gradient(#fafafa, #e8e8e8);
    border-bottom: 2px solid #a8a8a8;
}

thead th {
    height: 35px;
    border-right: 1px solid #c4c4c4;
}

thead th:first-child {
    border-right: 0;
}

th.current {
    font-size: 23px;
    font-weight: 700;
}

tbody th {
    padding-right: 12px;
    border-right: 2px solid #a8a8a8;
}

td {
    height: 34px;
    padding: 0 8px;
    border-right: 1px solid #c4c4c4;
    border-bottom: 1px solid #c4c4c4;
    white-space: nowrap;
}

.types td {
    height: 49px;
    padding: 0 0 0 1px;
}

.types select {
    padding-left: 48px;
}

.kind {
    position: absolute;
    left: 13px;
    top: 8px;
    font-size: 18px;
    font-weight: 600;
    color: #666;
}

.bar {
    display: flex;
    background: #e1e1e1;
}

.bar button {
    flex: 0 0 28px;
    display: grid;
    place-items: center;
    padding: 0;
    border: 0 solid #b4b4b4;
    background: #f8f8f8;
}

.thumb {
    flex: 0 0 54px;
    background: linear-gradient(#fff, #f1f1f1);
    border: 0 solid #b4b4b4;
}

.vertical {
    flex-direction: column;
    border-left: 1px solid #b4b4b4;
}

.vertical button, .vertical .thumb {
    border-bottom-width: 2px;
}

.vertical .end {
    margin-top: auto;
    border-width: 2px 0 0;
}

.horizontal {
    border-top: 1px solid #b4b4b4;
}

.horizontal button, .horizontal .thumb {
    border-right-width: 2px;
}

.horizontal .end {
    margin-left: auto;
    border-width: 0 0 0 2px;
}

.corner {
    border-top: 1px solid #b4b4b4;
    border-left: 1px solid #b4b4b4;
    background: #ebebeb;
}

/* buttons under the form */

.actions {
    display: flex;
    gap: 12px;
    margin-top: 56px;
}

.push {
    margin-left: auto;
}
```
